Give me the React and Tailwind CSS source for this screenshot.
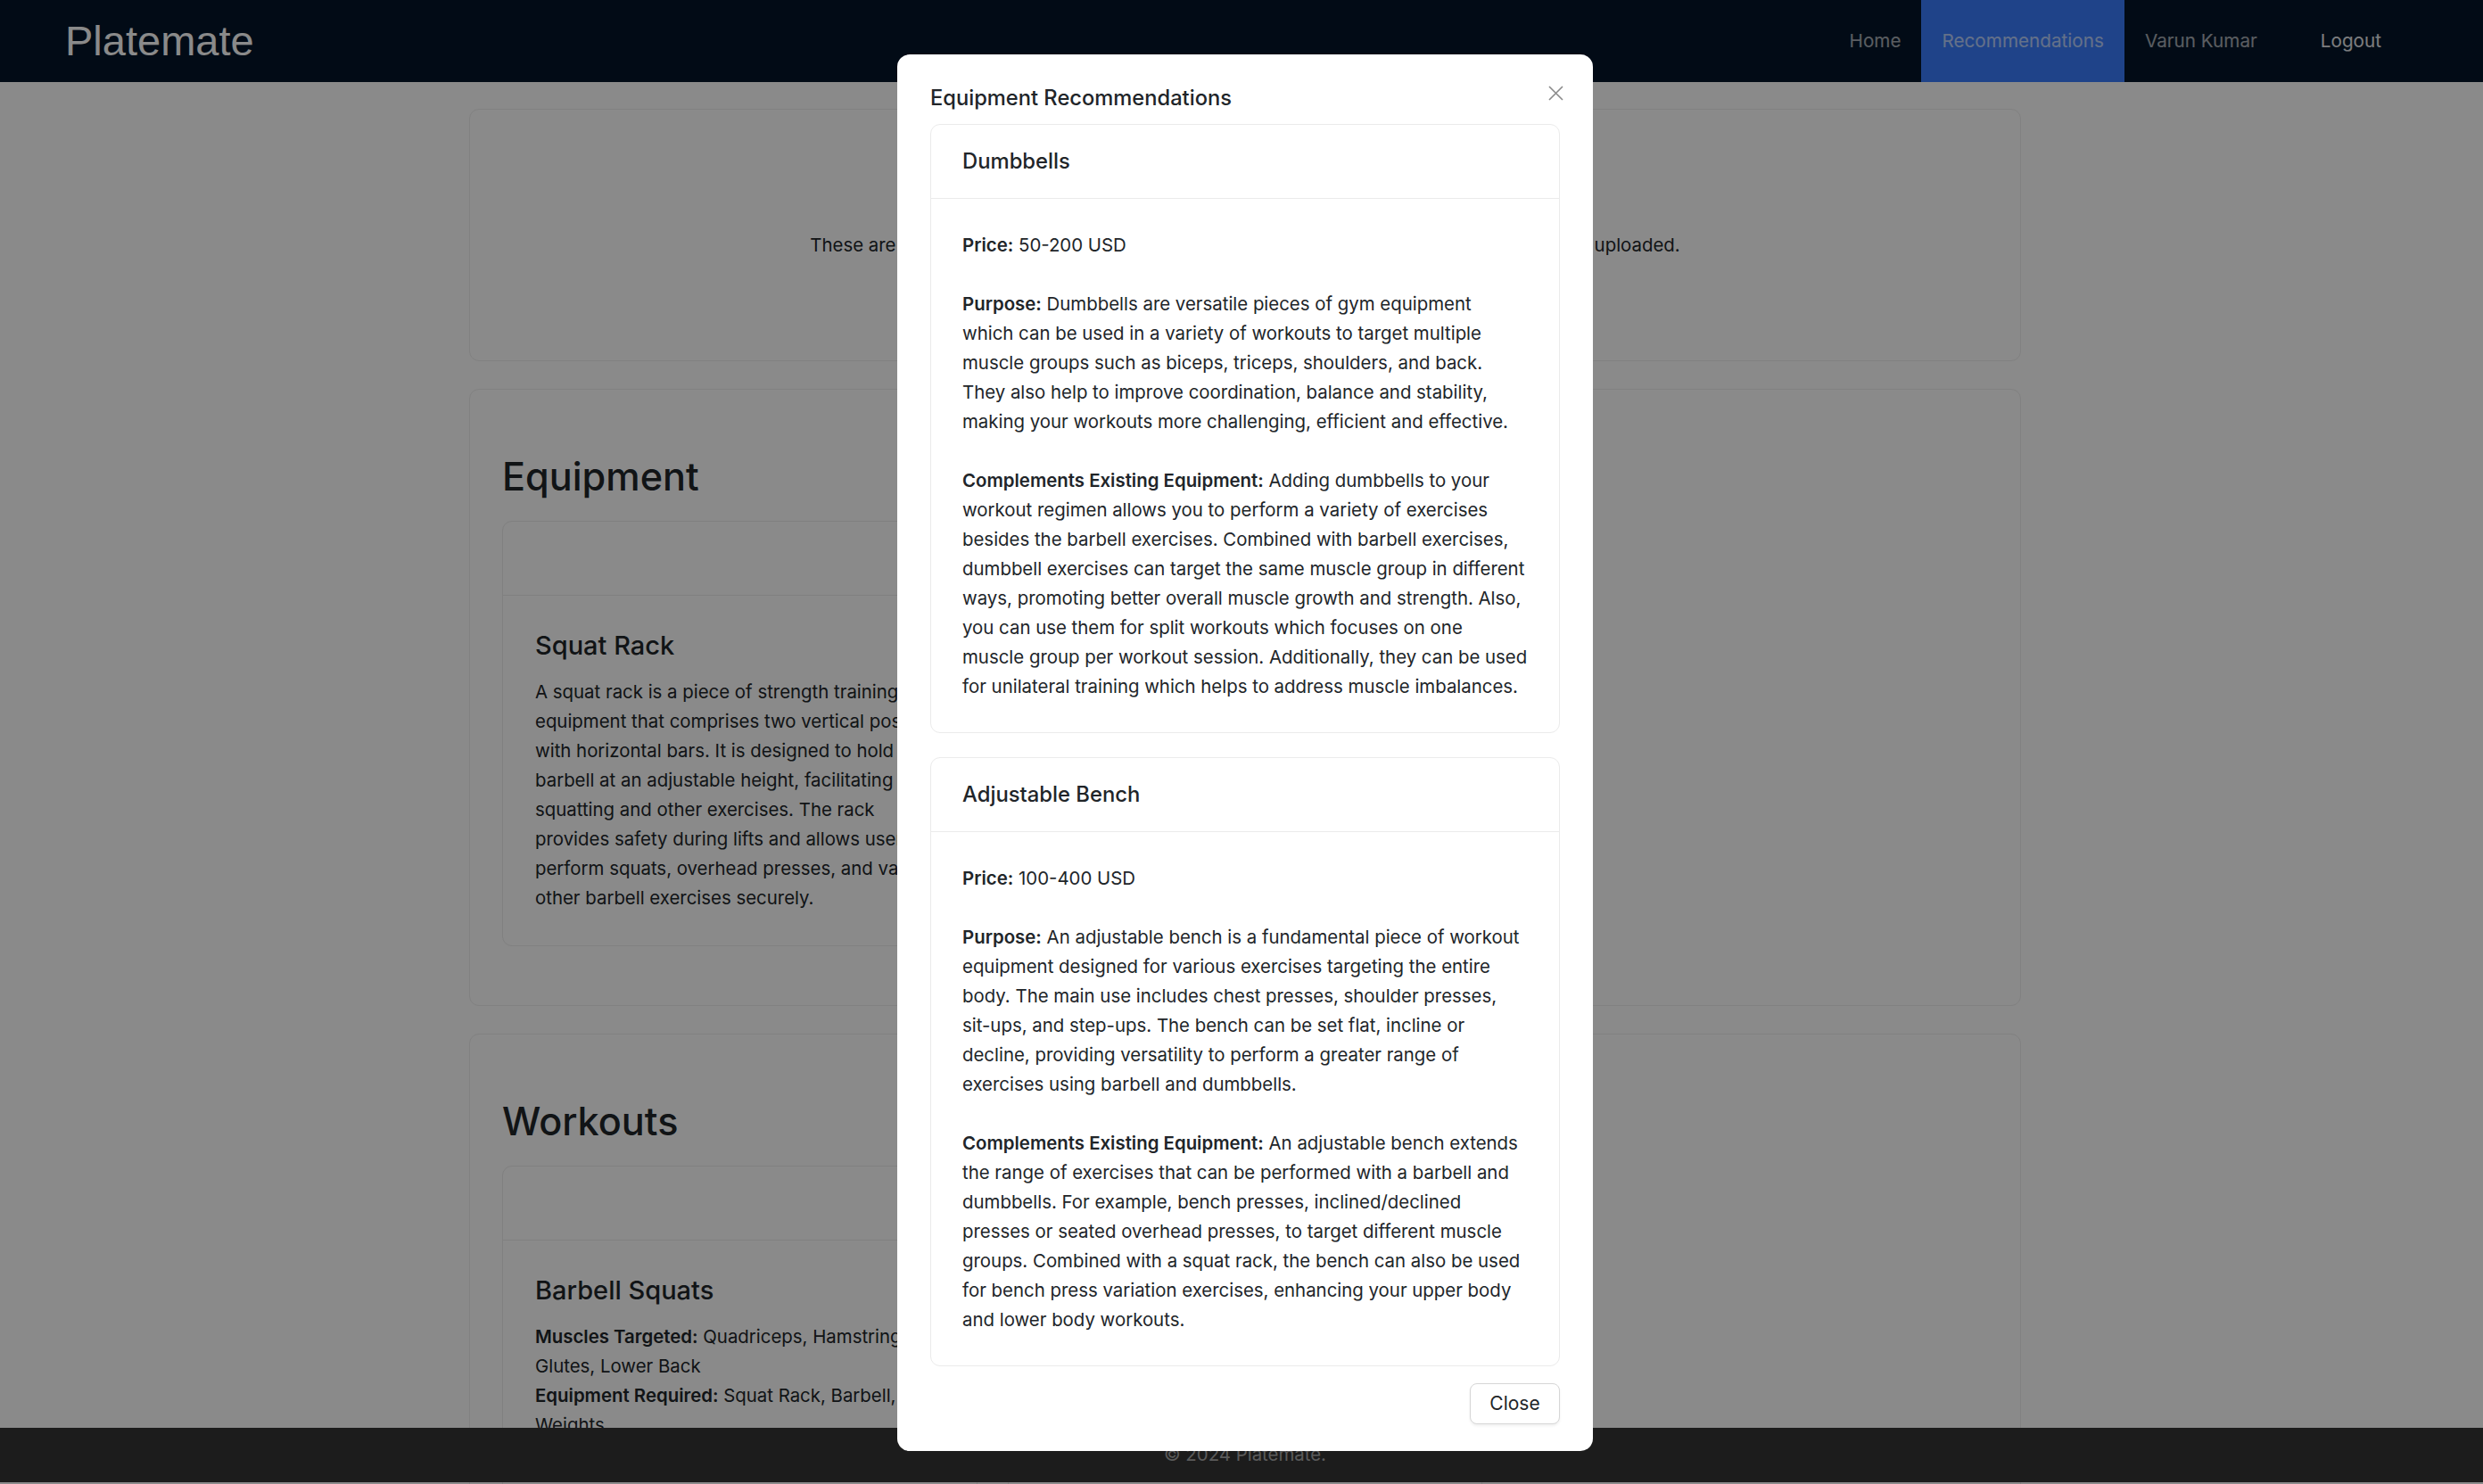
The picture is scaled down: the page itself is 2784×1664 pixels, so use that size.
import React from 'react';

// lines are kept as the reference wraps them
const recommendations = [
  {
    name: 'Dumbbells',
    price: '50-200 USD',
    purpose: [
      'Dumbbells are versatile pieces of gym equipment',
      'which can be used in a variety of workouts to target multiple',
      'muscle groups such as biceps, triceps, shoulders, and back.',
      'They also help to improve coordination, balance and stability,',
      'making your workouts more challenging, efficient and effective.',
    ],
    complements: [
      'Adding dumbbells to your',
      'workout regimen allows you to perform a variety of exercises',
      'besides the barbell exercises. Combined with barbell exercises,',
      'dumbbell exercises can target the same muscle group in different',
      'ways, promoting better overall muscle growth and strength. Also,',
      'you can use them for split workouts which focuses on one',
      'muscle group per workout session. Additionally, they can be used',
      'for unilateral training which helps to address muscle imbalances.',
    ],
  },
  {
    name: 'Adjustable Bench',
    price: '100-400 USD',
    purpose: [
      'An adjustable bench is a fundamental piece of workout',
      'equipment designed for various exercises targeting the entire',
      'body. The main use includes chest presses, shoulder presses,',
      'sit-ups, and step-ups. The bench can be set flat, incline or',
      'decline, providing versatility to perform a greater range of',
      'exercises using barbell and dumbbells.',
    ],
    complements: [
      'An adjustable bench extends',
      'the range of exercises that can be performed with a barbell and',
      'dumbbells. For example, bench presses, inclined/declined',
      'presses or seated overhead presses, to target different muscle',
      'groups. Combined with a squat rack, the bench can also be used',
      'for bench press variation exercises, enhancing your upper body',
      'and lower body workouts.',
    ],
  },
];

function Lines({ lines }) {
  return lines.map((line, i) => (
    <React.Fragment key={i}>
      {i > 0 && <br />}
      {line}
    </React.Fragment>
  ));
}

function RecommendationCard({ item }) {
  return (
    <div className="rounded-[11px] border border-[#ebebeb] bg-white">
      <div className="flex h-[83px] items-center border-b border-[#ebebeb] px-[35px] text-[23.8px] font-medium text-[#212529]">
        {item.name}
      </div>
      <div className="pt-[35px] pr-[20px] pb-[35px] pl-[35px] text-[20.4px] leading-[33px] whitespace-nowrap text-[#212529]">
        <p className="mb-[33px]">
          <span className="font-semibold">Price:</span> {item.price}
        </p>
        <p className="mb-[33px]">
          <span className="font-semibold">Purpose:</span> <Lines lines={item.purpose} />
        </p>
        <p>
          <span className="font-semibold">Complements Existing Equipment:</span> <Lines lines={item.complements} />
        </p>
      </div>
    </div>
  );
}

function ItemCard({ title, children }) {
  return (
    <div className="rounded-[11px] border border-[#ececec] bg-white">
      <div className="h-[83px] border-b border-[#ececec]"></div>
      <div className="px-[36px] pt-[38px] pb-[37px]">
        <h3 className="mb-[17px] text-[29px] leading-[36px] font-medium text-[#212529]">{title}</h3>
        <div className="text-[20.4px] leading-[33px] text-[#212529]">{children}</div>
      </div>
    </div>
  );
}

function Section({ title, children }) {
  return (
    <div className="mt-[31px] rounded-[11px] border border-[#eeeeee] bg-white px-[36px] pt-[70px] pb-[66px]">
      <h2 className="mb-[23px] text-[43.2px] leading-[54px] font-medium text-[#212529]">{title}</h2>
      <div className="grid grid-cols-3 gap-[34px]">{children}</div>
    </div>
  );
}

export default function App() {
  return (
    <div className="relative h-[1664px] overflow-hidden bg-white font-['Inter',sans-serif]">
      {/* navbar */}
      <nav className="flex h-[92px] items-center bg-[#04162a] pr-[91px] pl-[73px]">
        <span className="font-['Liberation_Sans',Arial,sans-serif] text-[47px] text-white">Platemate</span>
        <div className="ml-auto flex h-full items-stretch text-[20.7px]">
          <a className="flex items-center px-[23px] text-white/65">Home</a>
          <a className="flex items-center bg-[#3a7cfd] px-[23px] text-white/65">Recommendations</a>
          <a className="flex items-center px-[23px] text-white/65">Varun Kumar</a>
          <a className="ml-[25px] flex items-center px-[23px] text-white/90">Logout</a>
        </div>
      </nav>

      {/* page */}
      <div className="pt-[30px] pl-[8px]">
        <div className="mx-auto w-[1740px]">
          <div className="flex flex-col items-center rounded-[11px] border border-[#eeeeee] bg-white px-[36px] pt-[47px] pb-[45px] text-center">
            <h1 className="mb-[22px] text-[52px] leading-[66px] font-medium text-[#212529]">Your Recommendations</h1>
            <p className="mb-[22px] text-[20.4px] leading-[33px] text-[#212529]">
              These are customized equipment and workout recommendations based on the images you uploaded.
            </p>
            <button className="h-[46px] rounded-[8px] bg-[#3a7cfd] px-[24px] text-[20.4px] text-white">
              Upload More Photos
            </button>
          </div>

          <Section title="Equipment">
            <ItemCard title="Squat Rack">
              A squat rack is a piece of strength training equipment that comprises two vertical posts with horizontal
              bars. It is designed to hold a barbell at an adjustable height, facilitating squatting and other
              exercises. The rack provides safety during lifts and allows users to perform squats, overhead presses, and
              various other barbell exercises securely.
            </ItemCard>
            <ItemCard title="Weight Plates">
              Weight plates are flat discs loaded onto a barbell to adjust the resistance of each lift.
            </ItemCard>
          </Section>

          <Section title="Workouts">
            <ItemCard title="Barbell Squats">
              <div>
                <span className="font-semibold">Muscles Targeted:</span> Quadriceps, Hamstrings, Glutes, Lower Back
              </div>
              <div>
                <span className="font-semibold">Equipment Required:</span> Squat Rack, Barbell, Weights
              </div>
              <div>
                <span className="font-semibold">Sets &amp; Reps:</span> 4 sets of 8-10 reps
              </div>
            </ItemCard>
            <ItemCard title="Bench Press">
              <div>
                <span className="font-semibold">Muscles Targeted:</span> Chest, Shoulders, Triceps
              </div>
            </ItemCard>
          </Section>
        </div>
      </div>

      {/* footer */}
      <footer className="absolute right-0 bottom-[2px] left-0 flex h-[61px] items-center justify-center bg-[#343434] pl-[8px] text-[20.4px] text-[#a8a8a8]">
        © 2024 Platemate.
      </footer>

      {/* backdrop */}
      <div className="absolute inset-0 bg-black/[0.46]"></div>

      {/* modal */}
      <div className="absolute top-[61px] left-[1006px] w-[780px] rounded-[14px] bg-white px-[37px] pt-[32px] pb-[30px]">
        <h5 className="mb-[13px] text-[23.7px] leading-[33px] font-medium text-[#212529]">Equipment Recommendations</h5>
        <button className="absolute top-[35px] right-[33px] h-[17px] w-[17px]" aria-label="Close">
          <svg viewBox="0 0 17 17" className="h-[17px] w-[17px]">
            <path d="M1 1L16 16M16 1L1 16" stroke="#8a8a8a" strokeWidth="1.6" fill="none" />
          </svg>
        </button>
        <div className="flex flex-col gap-[27px]">
          {recommendations.map((item) => (
            <RecommendationCard key={item.name} item={item} />
          ))}
        </div>
        <div className="mt-[19px] flex justify-end">
          <button className="h-[46px] w-[101px] rounded-[8px] border border-[#d6d6d6] bg-white text-[21px] text-[#212529] shadow-[0_2px_3px_rgba(0,0,0,0.06)]">
            Close
          </button>
        </div>
      </div>
    </div>
  );
}
